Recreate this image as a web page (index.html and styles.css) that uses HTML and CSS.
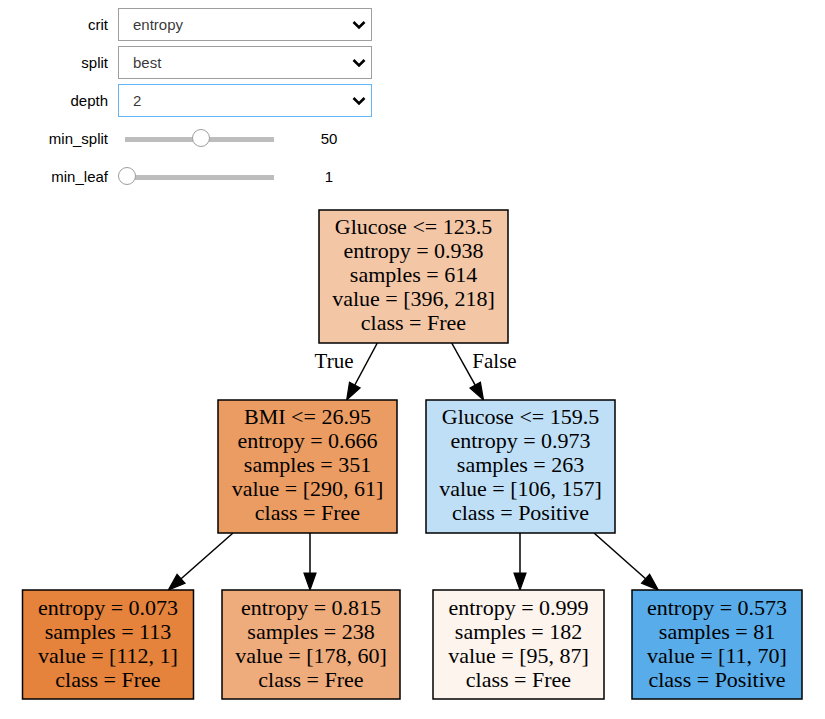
FILE: index.html
```html
<!DOCTYPE html>
<html lang="en">
<head>
    <meta charset="UTF-8">
    <title>Decision Tree Explorer</title>
    <link rel="stylesheet" href="styles.css">
</head>
<body>
    <div class="controls">
        <div class="row">
            <label class="lbl">crit</label>
            <div class="select"><span>entropy</span><svg class="chev" width="14" height="10" viewBox="0 0 14 10"><path d="M1.5 2 L7 7.5 L12.5 2"/></svg></div>
        </div>
        <div class="row">
            <label class="lbl">split</label>
            <div class="select"><span>best</span><svg class="chev" width="14" height="10" viewBox="0 0 14 10"><path d="M1.5 2 L7 7.5 L12.5 2"/></svg></div>
        </div>
        <div class="row">
            <label class="lbl">depth</label>
            <div class="select focus"><span>2</span><svg class="chev" width="14" height="10" viewBox="0 0 14 10"><path d="M1.5 2 L7 7.5 L12.5 2"/></svg></div>
        </div>
        <div class="row">
            <label class="lbl">min_split</label>
            <div class="slider">
                <div class="track"></div>
                <div class="knob" style="left: 67px"></div>
            </div>
            <span class="readout">50</span>
        </div>
        <div class="row">
            <label class="lbl">min_leaf</label>
            <div class="slider">
                <div class="track"></div>
                <div class="knob" style="left: -7px"></div>
            </div>
            <span class="readout">1</span>
        </div>
    </div>

    <!-- decision tree (graphviz output) -->
    <svg class="tree" width="825" height="519" viewBox="0 200 825 519">
        <g class="edges">
            <line x1="377.3" y1="343" x2="354.8" y2="385"/>
            <polygon points="349.5,382.2 360.1,387.9 346.7,400"/>
            <line x1="451.7" y1="343" x2="475.2" y2="385.2"/>
            <polygon points="470,388.1 480.4,382.3 483.5,400"/>
            <line x1="233" y1="533" x2="181.1" y2="578.8"/>
            <polygon points="177.1,574.3 185,583.3 168.3,590"/>
            <line x1="310" y1="533" x2="310" y2="573"/>
            <polygon points="304,573 316,573 310,590"/>
            <line x1="520" y1="533" x2="520" y2="573"/>
            <polygon points="514,573 526,573 520,590"/>
            <line x1="594" y1="533" x2="645.6" y2="578.7"/>
            <polygon points="641.6,583.2 649.6,574.2 658.3,590"/>
        </g>
        <text class="elabel" x="334" y="368">True</text>
        <text class="elabel" x="494.5" y="368">False</text>

        <g class="node">
            <rect x="319" y="210" width="189" height="133" fill="#f3c6a6"/>
            <text x="413.5" y="234">Glucose &lt;= 123.5</text>
            <text x="413.5" y="258">entropy = 0.938</text>
            <text x="413.5" y="282">samples = 614</text>
            <text x="413.5" y="306">value = [396, 218]</text>
            <text x="413.5" y="330">class = Free</text>
        </g>
        <g class="node">
            <rect x="218" y="400" width="179" height="133" fill="#eb9c63"/>
            <text x="307.5" y="424">BMI &lt;= 26.95</text>
            <text x="307.5" y="448">entropy = 0.666</text>
            <text x="307.5" y="472">samples = 351</text>
            <text x="307.5" y="496">value = [290, 61]</text>
            <text x="307.5" y="520">class = Free</text>
        </g>
        <g class="node">
            <rect x="426" y="400" width="189" height="133" fill="#bfdff7"/>
            <text x="520.5" y="424">Glucose &lt;= 159.5</text>
            <text x="520.5" y="448">entropy = 0.973</text>
            <text x="520.5" y="472">samples = 263</text>
            <text x="520.5" y="496">value = [106, 157]</text>
            <text x="520.5" y="520">class = Positive</text>
        </g>
        <g class="node">
            <rect x="22.5" y="590" width="171" height="109" fill="#e5823b"/>
            <text x="108" y="615">entropy = 0.073</text>
            <text x="108" y="639">samples = 113</text>
            <text x="108" y="663">value = [112, 1]</text>
            <text x="108" y="687">class = Free</text>
        </g>
        <g class="node">
            <rect x="222" y="590" width="178" height="109" fill="#eeab7c"/>
            <text x="311" y="615">entropy = 0.815</text>
            <text x="311" y="639">samples = 238</text>
            <text x="311" y="663">value = [178, 60]</text>
            <text x="311" y="687">class = Free</text>
        </g>
        <g class="node">
            <rect x="433" y="590" width="171" height="109" fill="#fdf4ee"/>
            <text x="518.5" y="615">entropy = 0.999</text>
            <text x="518.5" y="639">samples = 182</text>
            <text x="518.5" y="663">value = [95, 87]</text>
            <text x="518.5" y="687">class = Free</text>
        </g>
        <g class="node">
            <rect x="632" y="590" width="170" height="109" fill="#58ace9"/>
            <text x="717" y="615">entropy = 0.573</text>
            <text x="717" y="639">samples = 81</text>
            <text x="717" y="663">value = [11, 70]</text>
            <text x="717" y="687">class = Positive</text>
        </g>
    </svg>
</body>
</html>
```

FILE: styles.css
```css
body {
    margin: 0;
    background: white;
    font-family: "Liberation Sans", Arial, sans-serif;
}
.controls {
    height: 200px;
    box-sizing: border-box;
    padding-top: 8px;
}
.row {
    display: flex;
    align-items: center;
    height: 33px;
    margin-bottom: 5px;
}
.lbl {
    width: 118px;
    box-sizing: border-box;
    padding-right: 10px;
    text-align: right;
    font-size: 15px;
    color: #000;
}
.select {
    width: 254px;
    height: 33px;
    box-sizing: border-box;
    border: 1px solid #9e9e9e;
    display: flex;
    align-items: center;
    padding: 0 5px 0 14px;
    font-size: 15px;
    color: rgba(0,0,0,0.8);
}
.select.focus {
    border-color: #64b5f6;
}
.chev {
    margin-left: auto;
}
.chev path {
    fill: none;
    stroke: #000;
    stroke-width: 2.6;
}
.slider {
    position: relative;
    margin-left: 7px;
    width: 149px;
    height: 33px;
    display: flex;
    align-items: center;
}
.track {
    width: 100%;
    height: 5px;
    background: #bdbdbd;
    margin-top: 1px;
}
.knob {
    position: absolute;
    top: 7px;
    width: 18px;
    height: 18px;
    box-sizing: border-box;
    border: 1px solid #9e9e9e;
    border-radius: 50%;
    background: white;
}
.readout {
    width: 40px;
    margin-left: 35px;
    text-align: center;
    font-size: 15px;
    color: #000;
}
.tree {
    display: block;
}
.tree .edges line {
    stroke: #000;
    stroke-width: 1.5;
}
.tree .edges polygon {
    fill: #000;
    stroke: #000;
    stroke-width: 1.2;
}
.tree .node rect {
    stroke: #000;
    stroke-width: 1.5;
}
.tree text {
    font-family: "Liberation Serif", "Times New Roman", serif;
    font-size: 22px;
    text-anchor: middle;
    fill: #000;
}
.tree .elabel {
    font-size: 21px;
}
```
